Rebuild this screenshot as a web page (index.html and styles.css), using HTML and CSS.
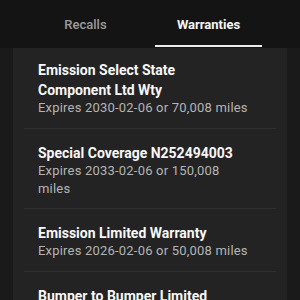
FILE: index.html
```html
<!DOCTYPE html>
<html>
<head>
<meta charset="utf-8">
<link rel="stylesheet" href="styles.css">
</head>
<body>
<div class="tabs">
  <div class="tab"><span class="tab-label">Recalls</span></div>
  <div class="tab tab-active"><span class="tab-label">Warranties</span></div>
</div>
<div class="panel">
  <div class="item">
    <div class="title">Emission Select State Component Ltd Wty</div>
    <div class="sub">Expires 2030-02-06 or 70,008 miles</div>
  </div>
  <div class="item">
    <div class="title">Special Coverage N252494003</div>
    <div class="sub">Expires 2033-02-06 or 150,008 miles</div>
  </div>
  <div class="item">
    <div class="title">Emission Limited Warranty</div>
    <div class="sub">Expires 2026-02-06 or 50,008 miles</div>
  </div>
  <div class="item">
    <div class="title">Bumper to Bumper Limited Warranty</div>
    <div class="sub">Expires 2024-02-06 or 50,008 miles</div>
  </div>
</div>
</body>
</html>
```
FILE: styles.css
```css
html, body {
  margin: 0;
  padding: 0;
  height: 100%;
  overflow: hidden;
}
body {
  background: #1a1a1a;
  font-family: Roboto, "Open Sans", sans-serif;
  color: #f5f5f5;
}
.tabs {
  display: flex;
  height: 48px;
  padding: 0 24px;
  background: #141414;
}
.tab {
  flex: 0 0 123px;
  box-sizing: border-box;
  padding: 0 8px;
}
.tab-label {
  display: block;
  box-sizing: border-box;
  height: 47px;
  padding-top: 17px;
  line-height: 16px;
  font-size: 13px;
  font-weight: 500;
  text-align: center;
  color: #9c9c9c;
  border-bottom: 2px solid transparent;
}
.tab-active .tab-label {
  color: #f7f7f7;
  font-weight: 700;
  border-bottom-color: #ececec;
}
.panel {
  margin: 0 13px;
  padding: 0 11px;
  background: #232323;
  min-height: 300px;
}
.item {
  padding: 14px 26px 10.5px 14px;
  border-bottom: 1px solid #2f2f2f;
}
.item:first-child {
  padding-top: 12px;
}
.title {
  font-size: 14px;
  line-height: 20px;
  font-weight: 700;
  color: #f7f7f7;
}
.sub {
  margin-top: -1px;
  font-size: 13px;
  line-height: 18px;
  letter-spacing: 0.2px;
  color: #b4b4b4;
}
```
